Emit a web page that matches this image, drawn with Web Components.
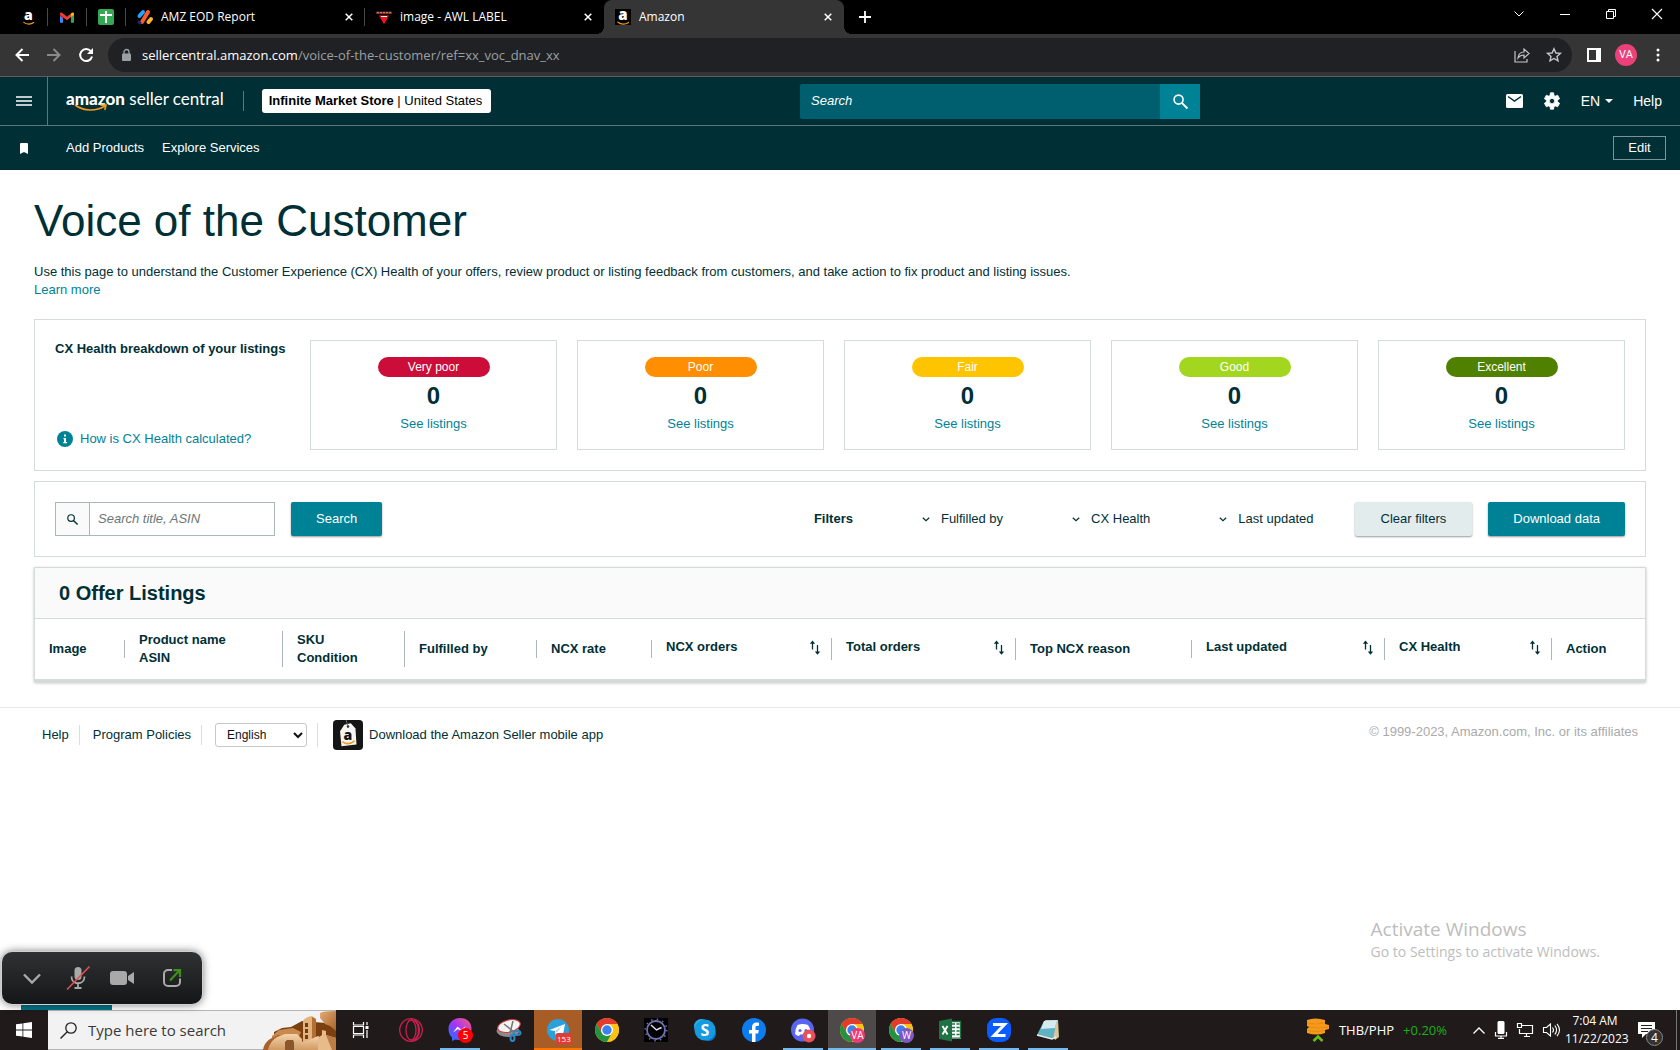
<!DOCTYPE html>
<html lang="en">
<head>
<meta charset="utf-8">
<title>Amazon</title>
<style>
    html, body {
        margin: 0;
        height: 100%;
    }
    body {
        --ink: #002f36;
        --teal: #008296;
        --line: #d5dbdb;
        --ui: "Segoe UI", "Open Sans", "Noto Sans", sans-serif;
        font: 13px/18px "Liberation Sans", Arial, sans-serif;
        color: var(--ink);
        background: #fff;
    }
    desktop-screen {
        min-height: 100vh;
    }
</style>
</head>
<body>
<desktop-screen>
    <browser-tabs slot="browser"></browser-tabs>
    <browser-bar slot="browser"></browser-bar>
    <seller-header slot="page"></seller-header>
    <seller-nav slot="page"></seller-nav>
    <voice-page slot="page">
        <health-panel>
            <rating-card colour="#cc0c39" count="0">Very poor</rating-card>
            <rating-card colour="#ff8f00" count="0">Poor</rating-card>
            <rating-card colour="#ffc400" count="0">Fair</rating-card>
            <rating-card colour="#a2d61f" count="0">Good</rating-card>
            <rating-card colour="#508000" count="0">Excellent</rating-card>
        </health-panel>
        <filter-bar></filter-bar>
        <listings-table></listings-table>
    </voice-page>
    <page-footer slot="page"></page-footer>
    <activate-note slot="overlay"></activate-note>
    <meeting-bar slot="overlay"></meeting-bar>
    <task-bar slot="taskbar"></task-bar>
</desktop-screen>

<script>
const smile = (c) => `<path d="M3 13.2c3 2.4 7.500 2.400 10.500.2" fill="none" stroke="${c}" stroke-width="1.300" stroke-linecap="round"/>`;
const chromeWheel = `
    <circle cx="12" cy="12" r="12" fill="#fbc116"/>
    <path d="M12 12 6.800 15 1.600 6A12 12 0 0 1 22.400 6H12z" fill="#e33b2e"/>
    <path d="M1.600 6 6.800 15l5.200 3-2 5.800A12 12 0 0 1 1.600 6z" fill="#229342"/>
    <path d="M17.200 15 12 24a12 12 0 0 1-3-.4L12 17z" fill="#229342"/>
    <path d="M22.400 6H12v6l5.200 3L12 24A12 12 0 0 0 22.400 6z" fill="#fbc116"/>
    <circle cx="12" cy="12" r="6" fill="#fff"/><circle cx="12" cy="12" r="4.700" fill="#3b82f0"/>`;

// name: [viewBox, markup]
const ICONS = {
    amazon: ['0 0 16 16', `<rect width="16" height="16" fill="#000"/><text x="8" y="11" text-anchor="middle" font-family="Open Sans, sans-serif" font-weight="800" font-size="15" fill="#fff">a</text>${smile('#f79a1c')}`],
    gmail: ['0 0 16 12', '<path d="M0 1.500V12h3.500V5z" fill="#4285f4"/><path d="M16 1.500V12h-3.500V5z" fill="#34a853"/><path d="M0 1.500C0 0 2 0 3 1l5 4 5-4v4L8 9 0 3.500z" fill="#ea4335"/><path d="M12.500 1.400C14 0 16 0 16 2v1l-3.500 2.500z" fill="#fbbc04"/><path d="M0 2.500 3.500 5v2L0 4z" fill="#c5221f"/>'],
    sheets: ['0 0 16 16', '<rect width="16" height="16" rx="2" fill="#34a853"/><path d="M7 2h2v3h5v2H9v7H7V7H2V5h5z" fill="#fff"/>'],
    monday: ['0 0 16 16', '<g stroke-width="4" stroke-linecap="round"><path d="M2.500 7 6 3" stroke="#1ea4ff"/><path d="M5 13l6-10" stroke="#ff5a2c"/><path d="M11.500 13 14 10" stroke="#ffb52e"/><path d="M2 13l1 1" stroke="#1c2a64" stroke-width="3"/></g>'],
    label: ['0 0 16 16', '<path d="M0 2.500h16v2.500H0z" fill="#6d2038"/><path d="M1 3.700h14" stroke="#d8a23c" stroke-dasharray="2 1"/><path d="M3 6.500h10L8 15.500z" fill="#f0121c"/><path d="M5 7.500h6" stroke="#fff"/>'],
    cross: ['0 0 8 8', '<path d="M.7.7l6.600 6.600M7.300.7.7 7.300" stroke="currentColor" stroke-width="1.500"/>'],
    plus: ['0 0 12 12', '<path d="M6 0v12M0 6h12" stroke="currentColor" stroke-width="1.800"/>'],
    down: ['0 0 10 6', '<path d="M.5.5 5 5 9.500.5" fill="none" stroke="currentColor"/>'],
    up: ['0 0 12 7', '<path d="M.5 6.500 6 1l5.500 5.500" fill="none" stroke="currentColor" stroke-width="1.300"/>'],
    minimise: ['0 0 10 10', '<path d="M0 5.500h10" stroke="currentColor"/>'],
    restore: ['0 0 10 10', '<path d="M.5 2.500h7v7h-7zM2.500 2.500v-2h7v7h-2" fill="none" stroke="currentColor"/>'],
    close: ['0 0 10 10', '<path d="M0 0l10 10M10 0 0 10" stroke="currentColor" stroke-width="1.100"/>'],
    back: ['0 0 14 14', '<path d="M14 7H1.500M7.500 1 1.500 7l6 6" fill="none" stroke="currentColor" stroke-width="2"/>'],
    forward: ['0 0 14 14', '<path d="M0 7h12.500M6.500 1l6 6-6 6" fill="none" stroke="currentColor" stroke-width="2"/>'],
    reload: ['0 0 14 14', '<path d="M11.800 3.200A6 6 0 1 0 13 8.500" fill="none" stroke="currentColor" stroke-width="2"/><path d="M14 0v6H8z" fill="currentColor"/>'],
    lock: ['0 0 10 12', '<rect x="0" y="4.500" width="9" height="7.500" rx="1" fill="currentColor"/><path d="M2 5V3a2.500 2.500 0 0 1 5 0v2" fill="none" stroke="currentColor" stroke-width="1.300"/>'],
    share: ['0 0 16 16', '<path d="M1 4v11h12v-3M4 11c.5-4 3-6 6-6V2l5 4.500-5 4.500V8c-3 0-4.500 1-6 3z" fill="none" stroke="currentColor" stroke-width="1.200"/>'],
    star: ['0 0 16 16', '<path d="M8 1.800l1.900 4.200 4.500.4-3.400 3 1 4.400L8 11.500l-4 2.300 1-4.400-3.400-3 4.500-.4z" fill="none" stroke="currentColor" stroke-width="1.400"/>'],
    panel: ['0 0 14 14', '<path d="M1 1h12v12H1z" fill="none" stroke="currentColor" stroke-width="2"/><path d="M9 0h5v14H9z" fill="currentColor"/>'],
    dots: ['0 0 4 14', '<g fill="currentColor"><circle cx="2" cy="2" r="1.500"/><circle cx="2" cy="7" r="1.500"/><circle cx="2" cy="12" r="1.500"/></g>'],
    menu: ['0 0 16 10', '<path d="M0 1h16M0 5h16M0 9h16" stroke="currentColor" stroke-width="1.700"/>'],
    bookmark: ['0 0 8 11', '<path d="M0 1q0-1 1-1h6q1 0 1 1v10L4 9l-4 2z" fill="currentColor"/>'],
    search: ['0 0 14 14', '<circle cx="5.200" cy="5.200" r="4.200" fill="none" stroke="currentColor" stroke-width="1.500"/><path d="M8.500 8.500l5 5" stroke="currentColor" stroke-width="1.800"/>'],
    mail: ['0 0 17 14', '<rect width="17" height="14" rx="1.500" fill="currentColor"/><path d="M2 2.500l6.500 4.500L15 2.500" fill="none" stroke="#002f36" stroke-width="1.500"/>'],
    gear: ['0 0 24 24', '<path d="M19.400 13a7.500 7.500 0 0 0 0-2l2.800-2.100-2.700-4.700-3.200 1.300a8 8 0 0 0-1.700-1L14.100 1H9.900l-.5 3.500a8 8 0 0 0-1.700 1L4.500 4.200 1.800 8.900 4.600 11a7.500 7.500 0 0 0 0 2l-2.800 2.100 2.700 4.700 3.200-1.300a8 8 0 0 0 1.700 1l.5 3.500h4.200l.5-3.500a8 8 0 0 0 1.700-1l3.200 1.300 2.700-4.700zM12 15.500a3.500 3.500 0 1 1 0-7 3.500 3.500 0 0 1 0 7z" fill="currentColor" stroke="currentColor" stroke-linejoin="round"/>'],
    caret: ['0 0 8 4', '<path d="M0 0h8L4 4z" fill="currentColor"/>'],
    info: ['0 0 16 16', '<circle cx="8" cy="8" r="8" fill="#008296"/><path d="M7 3.500h2v2H7zM6.500 7H9v4h1v1.300H6.300V11H7V8.200h-.5z" fill="#fff"/>'],
    chevron: ['0 0 8 5', '<path d="M.8.8 4 3.800 7.200.8" fill="none" stroke="currentColor" stroke-width="1.200"/>'],
    sort: ['0 0 12 15', '<path d="M3.500 9.500V2M8.500 5v8" fill="none" stroke="currentColor" stroke-width="1.300"/><path d="M.8 3.800 3.500.5l2.700 3.300zM5.800 11.500h5.400L8.500 14.800z" fill="currentColor"/>'],
    seller: ['0 0 32 32', '<rect width="32" height="32" rx="4" fill="#151515"/><path d="M12 5l7-1.500 5 5.500 1 17-16 2-1.500-16z" fill="#f5f5f5"/><circle cx="16" cy="7" r="1.300" fill="#151515"/><path d="M14 0l2 7" stroke="#777" stroke-width="1"/><text x="16" y="21" text-anchor="middle" font-family="Open Sans, sans-serif" font-weight="800" font-size="15" fill="#111">a</text><path d="M10 23c4 3 9 2.500 13-.8" fill="none" stroke="#f79a1c" stroke-width="1.600"/>'],
    collapse: ['0 0 18 11', '<path d="M1 1.500 9 9.500l8-8" fill="none" stroke="currentColor" stroke-width="2.400"/>'],
    muted: ['0 0 24 24', '<rect x="8.500" y="1" width="7" height="13" rx="3.500" fill="currentColor"/><path d="M5.500 10.500c0 9 13 9 13 0M12 17.500V22M8.500 22h7" fill="none" stroke="currentColor" stroke-width="1.800"/><path d="M1 23.500 23.500.5" stroke="#e05252" stroke-width="1.600"/>'],
    camera: ['0 0 24 14', '<rect width="17" height="14" rx="3" fill="currentColor"/><path d="M18 5l6-4v12l-6-4z" fill="currentColor"/>'],
    popout: ['0 0 18 18', '<path d="M9 1H5a4 4 0 0 0-4 4v8a4 4 0 0 0 4 4h8a4 4 0 0 0 4-4V9.500" fill="none" stroke="currentColor" stroke-width="2"/><path d="M7 11.500 16 2M10.500 1.200H17V8" fill="none" stroke="#3f8f1c" stroke-width="2.200"/>'],
    windows: ['0 0 16 16', '<path d="M0 2.300 6.500 1.400v6.200H0zM7.300 1.300 16 0v7.600H7.300zM0 8.400h6.500v6.200L0 13.700zM7.300 8.400H16V16l-8.700-1.300z" fill="#fff"/>'],
    lens: ['0 0 17 17', '<circle cx="11" cy="6" r="5.200" fill="none" stroke="currentColor" stroke-width="1.300"/><path d="M7.300 9.700.5 16.500" stroke="currentColor" stroke-width="1.400"/>'],
    ruins: ['0 0 74 39', `
        <defs>
            <linearGradient id="rock" x1="0" y1="0" x2="1" y2="1"><stop offset="0" stop-color="#e2ab74"/><stop offset="1" stop-color="#a8642a"/></linearGradient>
            <linearGradient id="wall" x1="0" y1="0" x2="0" y2="1"><stop offset="0" stop-color="#f4d3ac"/><stop offset="1" stop-color="#d09a63"/></linearGradient>
        </defs>
        <path d="M12 21l8-4 9-1 11-6 24 2 10 6v21H12z" fill="#7c3f10"/>
        <path d="M10 25l7-6 14-2 8 4-4 9-25 2z" fill="#c98a50"/>
        <path d="M58 2q2-2 16-2v20l-6-5-5-2-5-6z" fill="url(#rock)"/>
        <path d="M1 39q1-7 7-11l8-4 6 1 2 14z" fill="#a8622a"/>
        <path d="M6 39q2-9 9-13l8-3 12 0 5 5v11z" fill="url(#wall)"/>
        <path d="M23 31l2-2h6l1 2v8h-9z" fill="#8a572a"/>
        <path d="M41 10q2-4 9-5l4 3v24l-13-1z" fill="#e3b27d"/>
        <path d="M50 6l4 2v24h-4z" fill="#b07036"/>
        <path d="M43 12h3v4h-3zM43 18h3v4h-3zM43 24h3v4h-3z" fill="#6f3d15"/>
        <path d="M36 39l3-8 8-2 9-4 5 3 1 11z" fill="url(#wall)"/>
        <path d="M56 39V27l4-3v-5l4 1v4l10 3v12z" fill="#e8bb8a"/>
        <path d="M64 24l10 3v12h-4z" fill="#bd7d42"/>`],
    taskview: ['0 0 16 16', '<path d="M.5 0v3h10V0M.5 16v-3h10v3M.5 4.500h10v7H.5zM14 0v3M14 8v8" fill="none" stroke="#fff" stroke-width="1.200"/><path d="M12.500 4h3v3h-3z" fill="#fff"/>'],
    opera: ['0 0 24 24', '<circle cx="12" cy="12" r="11.300" fill="none" stroke="#c81e50" stroke-width="1.300"/><ellipse cx="12" cy="12" rx="5" ry="10" fill="none" stroke="#c81e50" stroke-width="1.300"/><path d="M12 1c10 2 10 20 0 22M16 2c6 6 6 14 0 20" fill="none" stroke="#c81e50" stroke-width="1.200"/>'],
    messenger: ['0 0 24 24', '<defs><linearGradient id="g" x1="0" y1="1" x2="1" y2="0"><stop offset="0" stop-color="#0a7cff"/><stop offset=".5" stop-color="#a334fa"/><stop offset="1" stop-color="#ff5c74"/></linearGradient></defs><path d="M12 0C5 0 .5 5 .5 11c0 4 1.500 6.500 3.500 8.500V23l3.500-1.500C18 24 23.500 18 23.500 11S19 0 12 0z" fill="url(#g)"/><path d="M5 14.500l4.500-6 3.500 3 5-3.500-4.500 6-3.500-3z" fill="#fff"/>'],
    snip: ['0 0 26 24', '<ellipse cx="12" cy="13" rx="11.500" ry="6" fill="#8c8c8c"/><ellipse cx="13" cy="8" rx="11.500" ry="6" fill="#f4f4f4" stroke="#d04040" transform="rotate(-14 13 8)"/><path d="M8 6l10 8M17 3l-3 12" stroke="#777" stroke-width="1.500"/><g fill="none" stroke="#2f86c5" stroke-width="2"><ellipse cx="21" cy="15" rx="3.500" ry="2"/><ellipse cx="16.500" cy="20" rx="2" ry="3"/></g>'],
    telegram: ['0 0 24 24', '<circle cx="12" cy="12" r="11" fill="#2aa1da"/><path d="M3.500 12 19 6l-2.500 13-5-4-2 2-.5-4z" fill="#fff"/><path d="M9 13l7-5-5 6.500z" fill="#b5d5e8"/>'],
    chrome: ['0 0 24 24', chromeWheel],
    clock: ['0 0 24 24', '<rect width="24" height="24" fill="#000"/><circle cx="12" cy="12" r="9" fill="none" stroke="#7272b0" stroke-width="1.800"/><circle cx="12" cy="12" r="10.800" fill="none" stroke="#7272b0" stroke-width="1.500" stroke-dasharray="1.500 4.200"/><path d="M7 7l5.500 5 5-2.500" fill="none" stroke="#e5e5ff" stroke-width="1.400"/>'],
    skype: ['0 0 24 24', '<circle cx="8.500" cy="8.500" r="7.500" fill="#28b4f0"/><circle cx="15.500" cy="15.500" r="7.500" fill="#0078d4"/><circle cx="12" cy="12" r="10.500" fill="#149be2"/><text x="12" y="17.500" text-anchor="middle" font-family="Open Sans, sans-serif" font-weight="700" font-size="16" fill="#fff">S</text>'],
    facebook: ['0 0 24 24', '<circle cx="12" cy="12" r="12" fill="#0c7cee"/><path d="M10 24v-8.500H7V12h3V9.500C10 6 12 4.500 14.500 4.500l2.500.2v3h-1.500c-1.500 0-2 .8-2 1.800V12h3.300l-.6 3.500h-2.700V24z" fill="#fff"/>'],
    discord: ['0 0 24 24', '<circle cx="11.500" cy="12" r="11.500" fill="#5865f2"/><path d="M6.500 7q5-2 10.500 0 3 4 3 9-2 2-4 2l-1-1.500H9L8 18q-2 0-4-2 0-5 2.500-9z" fill="#fff"/><circle cx="9" cy="12.500" r="1.600" fill="#5865f2"/><circle cx="15" cy="12.500" r="1.600" fill="#5865f2"/><circle cx="18" cy="18" r="6.500" fill="#e8505a"/><circle cx="18" cy="18" r="2.200" fill="#fff"/>'],
    excel: ['0 0 24 24', '<path d="M12 3h11v18H12z" fill="#fff"/><path d="M14 6h3M14 9.500h3M14 13h3M14 16.500h3M18.500 6h3M18.500 9.500h3M18.500 13h3M18.500 16.500h3M12 3.500h10.500v16.700H12" fill="none" stroke="#1f7244" stroke-width="1.300"/><path d="M1 3l13-2.500v23L1 21z" fill="#1f7244"/><path d="M4.500 8l5 8.500M9.500 8l-5 8.500" stroke="#fff" stroke-width="1.800"/>'],
    zoom: ['0 0 24 24', '<rect width="24" height="24" rx="9" fill="#0b5cff"/><path d="M6 6.500h11.500L7 17.500h11.500" fill="none" stroke="#fff" stroke-width="3"/>'],
    notepad: ['0 0 24 24', '<path d="M9 2h13l1 17-4 3z" fill="#d9c79a"/><path d="M8 3l13-1-4 19-16-4z" fill="#5fb2c2"/><path d="M8 3l13-1-2 8-14 1z" fill="#d4ecf0"/><path d="M1 17l15 4 4-2" fill="none" stroke="#eee" stroke-width="1.400"/>'],
    coins: ['0 0 24 24', '<path d="M1 2q8-3 18 0v4l4 1v4l-4 1v3q-8 3-18 0v-4l2-2-2-1z" fill="#f59a1b"/><path d="M1 5q8 2 18 0M3 9q10 2 20 0M2 12.500q8 2 17 0" fill="none" stroke="#e88a14"/><path d="M7.500 23l4.500-4.500 4.500 4.500" fill="none" stroke="#6bbf12" stroke-width="2.600"/>'],
    mic: ['0 0 12 18', '<rect x="2.500" y="0" width="7" height="13" rx="1.500" fill="#fff"/><path d="M.5 11v4h11v-4M6 15v2M3 17.300h6" fill="none" stroke="#fff" stroke-width="1.200"/>'],
    network: ['0 0 16 14', '<path d="M4 2.500h11.500v8H2.500V6M7 13.500h6M9.500 10.500v3M.5.5h4v4h-4z" fill="none" stroke="#fff" stroke-width="1.200"/>'],
    speaker: ['0 0 17 14', '<path d="M.5 4.500h3l4-3.500v12l-4-3.500h-3zM9.500 4.500q2 2.500 0 5M11.800 2.500q3.500 4.500 0 9M14 .8q5 6.200 0 12.400" fill="none" stroke="#fff" stroke-width="1.100"/>'],
    note: ['0 0 18 17', '<path d="M0 0h17v12H8l-4 4v-4H0z" fill="#fff"/><path d="M3 3.500h11M3 6.500h11M3 9.500h7" stroke="#222" stroke-width="1.200"/>'],
};

class UiIcon extends HTMLElement {
    connectedCallback() {
        const [box, markup] = ICONS[this.getAttribute('name')];
        const [, , w, h] = box.split(' ');
        const width = this.getAttribute('width') || w;
        const height = this.getAttribute('height') || h;
        this.attachShadow({mode: 'open'}).innerHTML = `
            <style>
                :host { display: inline-flex; flex: none; }
                svg { display: block; overflow: visible; }
            </style>
            <svg viewBox="${box}" width="${width}" height="${height}" aria-hidden="true">${markup}</svg>`;
    }
}
customElements.define('ui-icon', UiIcon);

// shared by every element that holds plain controls
const RESET = `
    * { box-sizing: border-box; }
    button {
        display: inline-flex;
        align-items: center;
        justify-content: center;
        margin: 0;
        padding: 0;
        border: 0;
        background: none;
        color: inherit;
        font: inherit;
    }
    a { color: inherit; text-decoration: none; }`;

class BaseElement extends HTMLElement {
    constructor() {
        super();
        const template = document.createElement('template');
        template.innerHTML = `<style>${RESET}${this.css()}</style>${this.html()}`;
        this.attachShadow({mode: 'open'}).appendChild(template.content.cloneNode(true));
    }
}

class DesktopScreen extends BaseElement {
    css() {
        return `
            :host { display: flex; flex-direction: column; }
            .page { position: relative; flex: 1; }`;
    }
    html() {
        return `
            <slot name="browser"></slot>
            <div class="page"><slot name="page"></slot><slot name="overlay"></slot></div>
            <slot name="taskbar"></slot>`;
    }
}
customElements.define('desktop-screen', DesktopScreen);

class BrowserTabs extends BaseElement {
    css() {
        return `
            :host {
                display: flex;
                height: 34px;
                background: #000;
                color: #fff;
                font: 12px/16px var(--ui);
            }
            .pin, .tab, .window button { display: flex; align-items: center; }
            .pin { justify-content: center; width: 39px; border-right: 1px solid #4a4a4a; }
            .pins { display: flex; height: 18px; margin: 8px 0 0 9px; }
            .tab { position: relative; width: 239px; padding: 0 12px 0 11px; gap: 8px; }
            .tab span { flex: 1; }
            .tab.line::after {
                content: "";
                position: absolute;
                right: 0;
                top: 8px;
                height: 18px;
                border-right: 1px solid #4a4a4a;
            }
            .active { width: 240px; background: #353535; border-radius: 8px 8px 0 0; }
            .active::before, .active::after {
                content: "";
                position: absolute;
                bottom: 0;
                width: 8px;
                height: 8px;
            }
            .active::before { left: -8px; background: radial-gradient(circle at 0 0, transparent 8px, #353535 8px); }
            .active::after { right: -8px; background: radial-gradient(circle at 100% 0, transparent 8px, #353535 8px); }
            .new { width: 42px; }
            .window { display: flex; margin-left: auto; height: 28px; }
            .window button { width: 46px; }`;
    }
    html() {
        return `
            <div class="pins">
                <div class="pin"><ui-icon name="amazon" width="15" height="15"></ui-icon></div>
                <div class="pin"><ui-icon name="gmail" width="14" height="11"></ui-icon></div>
                <div class="pin"><ui-icon name="sheets"></ui-icon></div>
            </div>
            <div class="tab line"><ui-icon name="monday"></ui-icon><span>AMZ EOD Report</span><button aria-label="Close tab"><ui-icon name="cross"></ui-icon></button></div>
            <div class="tab"><ui-icon name="label"></ui-icon><span>image - AWL LABEL</span><button aria-label="Close tab"><ui-icon name="cross"></ui-icon></button></div>
            <div class="tab active"><ui-icon name="amazon"></ui-icon><span>Amazon</span><button aria-label="Close tab"><ui-icon name="cross"></ui-icon></button></div>
            <button class="new" aria-label="New tab"><ui-icon name="plus"></ui-icon></button>
            <div class="window">
                <button aria-label="Search tabs"><ui-icon name="down"></ui-icon></button>
                <button aria-label="Minimise"><ui-icon name="minimise"></ui-icon></button>
                <button aria-label="Restore"><ui-icon name="restore"></ui-icon></button>
                <button aria-label="Close"><ui-icon name="close"></ui-icon></button>
            </div>`;
    }
}
customElements.define('browser-tabs', BrowserTabs);

class BrowserBar extends BaseElement {
    css() {
        return `
            :host {
                display: flex;
                align-items: center;
                height: 43px;
                padding: 0 6px;
                background: #353535;
                border-bottom: 1px solid #5c5c5c;
                color: #fff;
                box-sizing: border-box;
            }
            button { width: 32px; height: 32px; }
            .dim { color: #8a8a8a; }
            .address {
                flex: 1;
                display: flex;
                align-items: center;
                height: 34px;
                margin: 0 6px;
                padding: 0 2px 0 14px;
                gap: 10px;
                border-radius: 17px;
                background: #202124;
                color: #9aa0a6;
                font: 13px/20px var(--ui);
            }
            .address a { flex: 1; }
            .address b { color: #fff; font-weight: 400; }
            .tools { display: flex; color: #c4c7ca; }
            .avatar {
                width: 22px;
                height: 22px;
                margin: 0 5px;
                border-radius: 50%;
                background: #ec407a;
                font: 11px/22px Roboto, sans-serif;
            }`;
    }
    html() {
        return `
            <button aria-label="Back"><ui-icon name="back"></ui-icon></button>
            <button class="dim" aria-label="Forward"><ui-icon name="forward"></ui-icon></button>
            <button aria-label="Reload"><ui-icon name="reload"></ui-icon></button>
            <div class="address">
                <ui-icon name="lock"></ui-icon>
                <a href="#"><b>sellercentral.amazon.com</b>/voice-of-the-customer/ref=xx_voc_dnav_xx</a>
                <div class="tools">
                    <button aria-label="Share"><ui-icon name="share"></ui-icon></button>
                    <button aria-label="Bookmark"><ui-icon name="star"></ui-icon></button>
                </div>
            </div>
            <button aria-label="Side panel"><ui-icon name="panel"></ui-icon></button>
            <button class="avatar">VA</button>
            <button aria-label="Menu"><ui-icon name="dots"></ui-icon></button>`;
    }
}
customElements.define('browser-bar', BrowserBar);

class SellerHeader extends BaseElement {
    css() {
        return `
            :host {
                display: grid;
                grid-template-columns: 5fr 400px 3fr;
                align-items: center;
                height: 49px;
                box-sizing: border-box;
                border-bottom: 1px solid #5d787c;
                background: #002f36;
                color: #fff;
            }
            .left, .right { display: flex; align-items: center; }
            .menu { width: 48px; height: 48px; border-right: 1px solid #5d787c; }
            .logo { position: relative; margin-left: 18px; padding-bottom: 4px; font: 17px/22px Lato, sans-serif; }
            .logo b { font-weight: 900; }
            .logo svg { position: absolute; left: 8px; top: 16px; }
            .rule { height: 20px; margin: 0 18px 0 19px; border-left: 1px solid #5d787c; }
            .store {
                height: 24px;
                padding: 0 9px 0 7px;
                border-radius: 3px;
                background: #fff;
                color: #000;
                white-space: pre;
            }
            form { display: flex; height: 35px; }
            input {
                flex: 1;
                min-width: 0;
                padding: 0 11px;
                border: 0;
                border-radius: 2px 0 0 2px;
                background: #005f6e;
                font: italic 13px/18px "Liberation Sans", Arial, sans-serif;
            }
            input::placeholder { color: #fff; }
            form button { width: 40px; background: #008296; }
            .right { justify-content: flex-end; gap: 20px; padding-right: 18px; font-size: 14px; }
            .lang { gap: 5px; }`;
    }
    html() {
        return `
            <div class="left">
                <button class="menu" aria-label="Menu"><ui-icon name="menu"></ui-icon></button>
                <a class="logo" href="#"><b>amazon</b> seller central
                    <svg width="34" height="8" viewBox="0 0 34 8" aria-hidden="true"><path d="M1 1c9 6.500 21 6.500 30 1M26.500 1.200 32 1l-1.200 5" fill="none" stroke="#f79a1c" stroke-width="1.600"/></svg>
                </a>
                <span class="rule"></span>
                <button class="store"><b>Infinite Market Store</b> | United States</button>
            </div>
            <form>
                <input type="text" placeholder="Search" aria-label="Search">
                <button type="button" aria-label="Search"><ui-icon name="search" width="15" height="15"></ui-icon></button>
            </form>
            <div class="right">
                <button aria-label="Messages"><ui-icon name="mail"></ui-icon></button>
                <button aria-label="Settings"><ui-icon name="gear" width="18" height="18"></ui-icon></button>
                <button class="lang">EN <ui-icon name="caret"></ui-icon></button>
                <a href="#">Help</a>
            </div>`;
    }
}
customElements.define('seller-header', SellerHeader);

class SellerNav extends BaseElement {
    css() {
        return `
            :host {
                display: flex;
                align-items: center;
                gap: 18px;
                height: 44px;
                box-sizing: border-box;
                padding: 0 14px 0 0;
                background: #002f36;
                color: #fff;
            }
            .mark { width: 48px; }
            .edit {
                width: 53px;
                height: 24px;
                margin-left: auto;
                border: 1px solid #7c9295;
            }`;
    }
    html() {
        return `
            <button class="mark" aria-label="Favourites"><ui-icon name="bookmark"></ui-icon></button>
            <a href="#">Add Products</a>
            <a href="#">Explore Services</a>
            <button class="edit">Edit</button>`;
    }
}
customElements.define('seller-nav', SellerNav);

class VoicePage extends BaseElement {
    css() {
        return `
            :host { display: block; padding: 25px 34px; }
            h1 { margin: 0; font-size: 44px; line-height: 52px; font-weight: 400; }
            p { margin: 16px 0 20px; }
            a { color: var(--teal); }
            .panels { display: grid; gap: 10px; }`;
    }
    html() {
        return `
            <h1>Voice of the Customer</h1>
            <p>Use this page to understand the Customer Experience (CX) Health of your offers, review product or listing feedback from customers, and take action to fix product and listing issues.<br><a href="#">Learn more</a></p>
            <div class="panels"><slot></slot></div>`;
    }
}
customElements.define('voice-page', VoicePage);

class HealthPanel extends BaseElement {
    css() {
        return `
            :host {
                display: grid;
                grid-template-columns: 235px repeat(5, 1fr);
                gap: 20px;
                padding: 20px;
                border: 1px solid var(--line);
            }
            .about { display: flex; flex-direction: column; justify-content: space-between; }
            b { white-space: nowrap; }
            a { display: flex; align-items: center; gap: 7px; padding: 2px; color: var(--teal); }`;
    }
    html() {
        return `
            <div class="about">
                <b>CX Health breakdown of your listings</b>
                <a href="#"><ui-icon name="info"></ui-icon>How is CX Health calculated?</a>
            </div>
            <slot></slot>`;
    }
}
customElements.define('health-panel', HealthPanel);

class RatingCard extends BaseElement {
    static get observedAttributes() {
        return ['colour', 'count'];
    }
    css() {
        return `
            :host {
                display: flex;
                flex-direction: column;
                align-items: center;
                gap: 4px;
                padding: 16px;
                border: 1px solid var(--line);
            }
            .pill {
                width: 112px;
                border-radius: 10px;
                color: #fff;
                font-size: 12px;
                line-height: 20px;
                text-align: center;
            }
            .count { font-size: 24px; line-height: 30px; font-weight: 700; }
            a { color: var(--teal); }`;
    }
    html() {
        return `
            <span class="pill"><slot></slot></span>
            <span class="count"></span>
            <a href="#">See listings</a>`;
    }
    attributeChangedCallback(name, oldValue, newValue) {
        switch (name) {
            case 'colour':
                this.shadowRoot.querySelector('.pill').style.background = newValue;
            break;
            case 'count':
                this.shadowRoot.querySelector('.count').textContent = newValue;
            break;
        }
    }
}
customElements.define('rating-card', RatingCard);

class FilterBar extends BaseElement {
    css() {
        return `
            :host {
                display: flex;
                align-items: center;
                gap: 16px;
                padding: 20px;
                border: 1px solid var(--line);
            }
            .field { display: flex; width: 220px; height: 34px; border: 1px solid #aab7b8; }
            .field label {
                display: flex;
                align-items: center;
                justify-content: center;
                width: 34px;
                border-right: 1px solid #aab7b8;
                background: #fafafa;
            }
            input {
                flex: 1;
                min-width: 0;
                padding: 0 8px;
                border: 0;
                background: #fff;
                font: italic 13px/18px "Liberation Sans", Arial, sans-serif;
            }
            input::placeholder { color: #6c7778; }
            .btn {
                height: 34px;
                padding: 0 25px;
                border-radius: 2px;
                background: var(--teal);
                color: #fff;
                box-shadow: 0 1px 2px rgba(0, 0, 0, .4);
            }
            .plain { padding: 0 26px; background: #e3eced; color: var(--ink); }
            .filters { display: flex; gap: 69px; margin: 0 25px 0 auto; }
            .filters button { gap: 11px; }`;
    }
    html() {
        return `
            <div class="field">
                <label for="q"><ui-icon name="search" width="11" height="11"></ui-icon></label>
                <input id="q" type="text" placeholder="Search title, ASIN" aria-label="Search title, ASIN">
            </div>
            <button class="btn">Search</button>
            <div class="filters">
                <b>Filters</b>
                <button><ui-icon name="chevron"></ui-icon>Fulfilled by</button>
                <button><ui-icon name="chevron"></ui-icon>CX Health</button>
                <button><ui-icon name="chevron"></ui-icon>Last updated</button>
            </div>
            <button class="btn plain">Clear filters</button>
            <button class="btn">Download data</button>`;
    }
}
customElements.define('filter-bar', FilterBar);

class ListingsTable extends BaseElement {
    css() {
        return `
            :host {
                display: block;
                border: 1px solid var(--line);
                border-bottom-width: 3px;
                box-shadow: 0 1px 3px rgba(0, 0, 0, .25);
            }
            h2 {
                margin: 0;
                padding: 0 24px;
                border-bottom: 1px solid var(--line);
                background: #fafafa;
                font-size: 20px;
                line-height: 50px;
            }
            table { width: 100%; table-layout: fixed; border-collapse: collapse; }
            th { height: 60px; padding: 0; text-align: left; vertical-align: middle; }
            th div {
                display: flex;
                justify-content: space-between;
                padding: 0 10px 0 14px;
                border-right: 1px solid #aab7b8;
            }
            th:last-child div { border: 0; }
            .sort { height: 22px; }
            .sort button { height: 18px; }`;
    }
    html() {
        // heading, width, sortable
        const columns = [
            ['Image', 90], ['Product name<br>ASIN', 158], ['SKU<br>Condition', 122],
            ['Fulfilled by', 132], ['NCX rate', 115], ['NCX orders', 180, true],
            ['Total orders', 184, true], ['Top NCX reason', 176], ['Last updated', 193, true],
            ['CX Health', 167, true], ['Action', 93],
        ];
        const cols = columns.map(c => `<col style="width:${c[1]}px">`).join('');
        const heads = columns.map(c => `<th scope="col"><div${c[2] ? ' class="sort"' : ''}><span>${c[0]}</span>${c[2] ? '<button aria-label="Sort"><ui-icon name="sort"></ui-icon></button>' : ''}</div></th>`).join('');
        return `
            <h2>0 Offer Listings</h2>
            <table><colgroup>${cols}</colgroup><thead><tr>${heads}</tr></thead></table>`;
    }
}
customElements.define('listings-table', ListingsTable);

class PageFooter extends BaseElement {
    css() {
        return `
            :host {
                display: flex;
                align-items: center;
                padding: 12px 42px;
                border-top: 1px solid #e7e7e7;
            }
            .item { padding-right: 10px; margin-right: 13px; border-right: 1px solid #ddd; line-height: 20px; }
            select {
                width: 92px;
                height: 24px;
                padding: 0 0 0 7px;
                border: 1px solid #c4c8c8;
                border-radius: 3px;
                background: #fff;
                color: #111;
                font: 12px/18px "Liberation Sans", Arial, sans-serif;
            }
            .pick { display: flex; margin-right: 15px; padding-right: 10px; border-right: 1px solid #ddd; }
            .app { display: flex; align-items: center; gap: 6px; }
            small { margin-left: auto; align-self: flex-start; padding-top: 3px; color: #aaa; font-size: 13px; }`;
    }
    html() {
        return `
            <a class="item" href="#">Help</a>
            <a class="item" href="#">Program Policies</a>
            <div class="pick"><select aria-label="Language"><option>English</option></select></div>
            <a class="app" href="#"><ui-icon name="seller" width="30" height="30"></ui-icon>Download the Amazon Seller mobile app</a>
            <small>© 1999-2023, Amazon.com, Inc. or its affiliates</small>`;
    }
}
customElements.define('page-footer', PageFooter);

class ActivateNote extends BaseElement {
    css() {
        return `
            :host {
                position: absolute;
                right: 80px;
                bottom: 48px;
                color: #bdbdbd;
                font: 14px/20px var(--ui);
            }
            strong { display: block; font-size: 19px; line-height: 26px; font-weight: 400; }`;
    }
    html() {
        return '<strong>Activate Windows</strong>Go to Settings to activate Windows.';
    }
}
customElements.define('activate-note', ActivateNote);

class MeetingBar extends BaseElement {
    css() {
        return `
            :host { position: absolute; left: 2px; bottom: 0; }
            .bar {
                position: relative;
                display: grid;
                grid-template-columns: 44px 48px 40px 1fr;
                width: 200px;
                height: 52px;
                padding-left: 8px;
                border-radius: 10px;
                background: linear-gradient(#303133, #151617);
                box-shadow: 0 0 0 1px #d0d0d0, 0 0 10px rgba(0, 0, 0, .6);
                color: #a9a9a9;
            }
            .strip { width: 91px; height: 6px; margin-left: 19px; background: #007587; }`;
    }
    html() {
        return `
            <div class="bar">
                <button aria-label="Collapse"><ui-icon name="collapse"></ui-icon></button>
                <button aria-label="Unmute"><ui-icon name="muted"></ui-icon></button>
                <button aria-label="Camera"><ui-icon name="camera"></ui-icon></button>
                <button aria-label="Open"><ui-icon name="popout"></ui-icon></button>
            </div>
            <div class="strip"></div>`;
    }
}
customElements.define('meeting-bar', MeetingBar);

// one app button; the slot takes a badge
class TaskItem extends BaseElement {
    css() {
        return `
            :host {
                position: relative;
                display: flex;
                align-items: center;
                justify-content: center;
                width: 48px;
                height: 40px;
            }
            :host([running])::after {
                content: "";
                position: absolute;
                left: 4px;
                right: 4px;
                bottom: 0;
                height: 2px;
                background: #76b9ed;
            }
            :host([current]) { background: #4d4a49; }
            :host([alert]) { background: #a85d26; }
            :host([current])::after, :host([alert])::after { left: 0; right: 0; }
            :host([alert])::after { background: #ff7300; }
            ::slotted(i) {
                position: absolute;
                left: 22px;
                top: 18px;
                min-width: 15px;
                border-radius: 8px;
                color: #fff;
                font: 10px/15px var(--ui);
                text-align: center;
            }`;
    }
    html() {
        return '<button></button><slot></slot>';
    }
    connectedCallback() {
        const button = this.shadowRoot.querySelector('button');
        button.setAttribute('aria-label', this.getAttribute('icon'));
        button.innerHTML = `<ui-icon name="${this.getAttribute('icon')}"></ui-icon>`;
    }
}
customElements.define('task-item', TaskItem);

class TaskBar extends BaseElement {
    css() {
        return `
            :host {
                display: flex;
                height: 40px;
                background: #201b1a;
                color: #fff;
                font: 13px/18px var(--ui);
            }
            .find {
                display: flex;
                align-items: center;
                width: 288px;
                padding-left: 12px;
                border: 1px solid #b5b5b5;
                border-width: 1px 0;
                margin-right: 1px;
                background: #f2f2f2;
                color: #222;
            }
            .find input {
                flex: 1;
                min-width: 0;
                padding: 0 11px;
                border: 0;
                background: none;
                font: 15px/20px var(--ui);
            }
            .find input::placeholder { color: #3a3a3a; }
            .apps { display: flex; gap: 1px; }
            .apps task-item:first-child { margin-right: 1px; }
            .red { background: #f00; }
            i.count { top: 23px; padding: 0 1px; border-radius: 2px; background: #e53935; font-size: 8px; line-height: 11px; }
            .va { background: #ec3a77; }
            .w { background: #7e57c2; }
            .tray { display: flex; align-items: center; margin-left: auto; }
            .rate { display: flex; align-items: center; gap: 9px; margin-right: 26px; }
            .rate em { color: #18b318; font-style: normal; }
            .icons { display: flex; align-items: center; gap: 10px; margin-right: 5px; }
            time { width: 60px; text-align: center; font-size: 12px; }
            .notes { position: relative; justify-content: flex-start; width: 51px; height: 40px; padding-left: 13px; }
            .notes i {
                position: absolute;
                left: 21px;
                top: 19px;
                width: 17px;
                border: 1px solid #888;
                border-radius: 50%;
                background: #333;
                font: 12px/15px var(--ui);
            }
            .show { width: 4px; height: 40px; border-left: 1px solid #777; }`;
    }
    html() {
        return `
            <task-item icon="windows"></task-item>
            <label class="find">
                <ui-icon name="lens"></ui-icon>
                <input type="text" placeholder="Type here to search" aria-label="Type here to search">
                <ui-icon name="ruins"></ui-icon>
            </label>
            <div class="apps">
                <task-item icon="taskview"></task-item>
                <task-item icon="opera"></task-item>
                <task-item icon="messenger" running><i class="red">5</i></task-item>
                <task-item icon="snip"></task-item>
                <task-item icon="telegram" running alert><i class="count">153</i></task-item>
                <task-item icon="chrome"></task-item>
                <task-item icon="clock"></task-item>
                <task-item icon="skype"></task-item>
                <task-item icon="facebook"></task-item>
                <task-item icon="discord" running></task-item>
                <task-item icon="chrome" running current><i class="va">VA</i></task-item>
                <task-item icon="chrome" running><i class="w">W</i></task-item>
                <task-item icon="excel" running></task-item>
                <task-item icon="zoom" running></task-item>
                <task-item icon="notepad" running></task-item>
            </div>
            <div class="tray">
                <button class="rate"><ui-icon name="coins"></ui-icon><span>THB/PHP</span><em>+0.20%</em></button>
                <div class="icons">
                    <ui-icon name="up"></ui-icon>
                    <ui-icon name="mic"></ui-icon>
                    <ui-icon name="network"></ui-icon>
                    <ui-icon name="speaker"></ui-icon>
                </div>
                <time>7:04 AM<br>11/22/2023</time>
                <button class="notes" aria-label="Notifications"><ui-icon name="note"></ui-icon><i>4</i></button>
                <button class="show" aria-label="Show desktop"></button>
            </div>`;
    }
}
customElements.define('task-bar', TaskBar);
</script>
</body>
</html>
